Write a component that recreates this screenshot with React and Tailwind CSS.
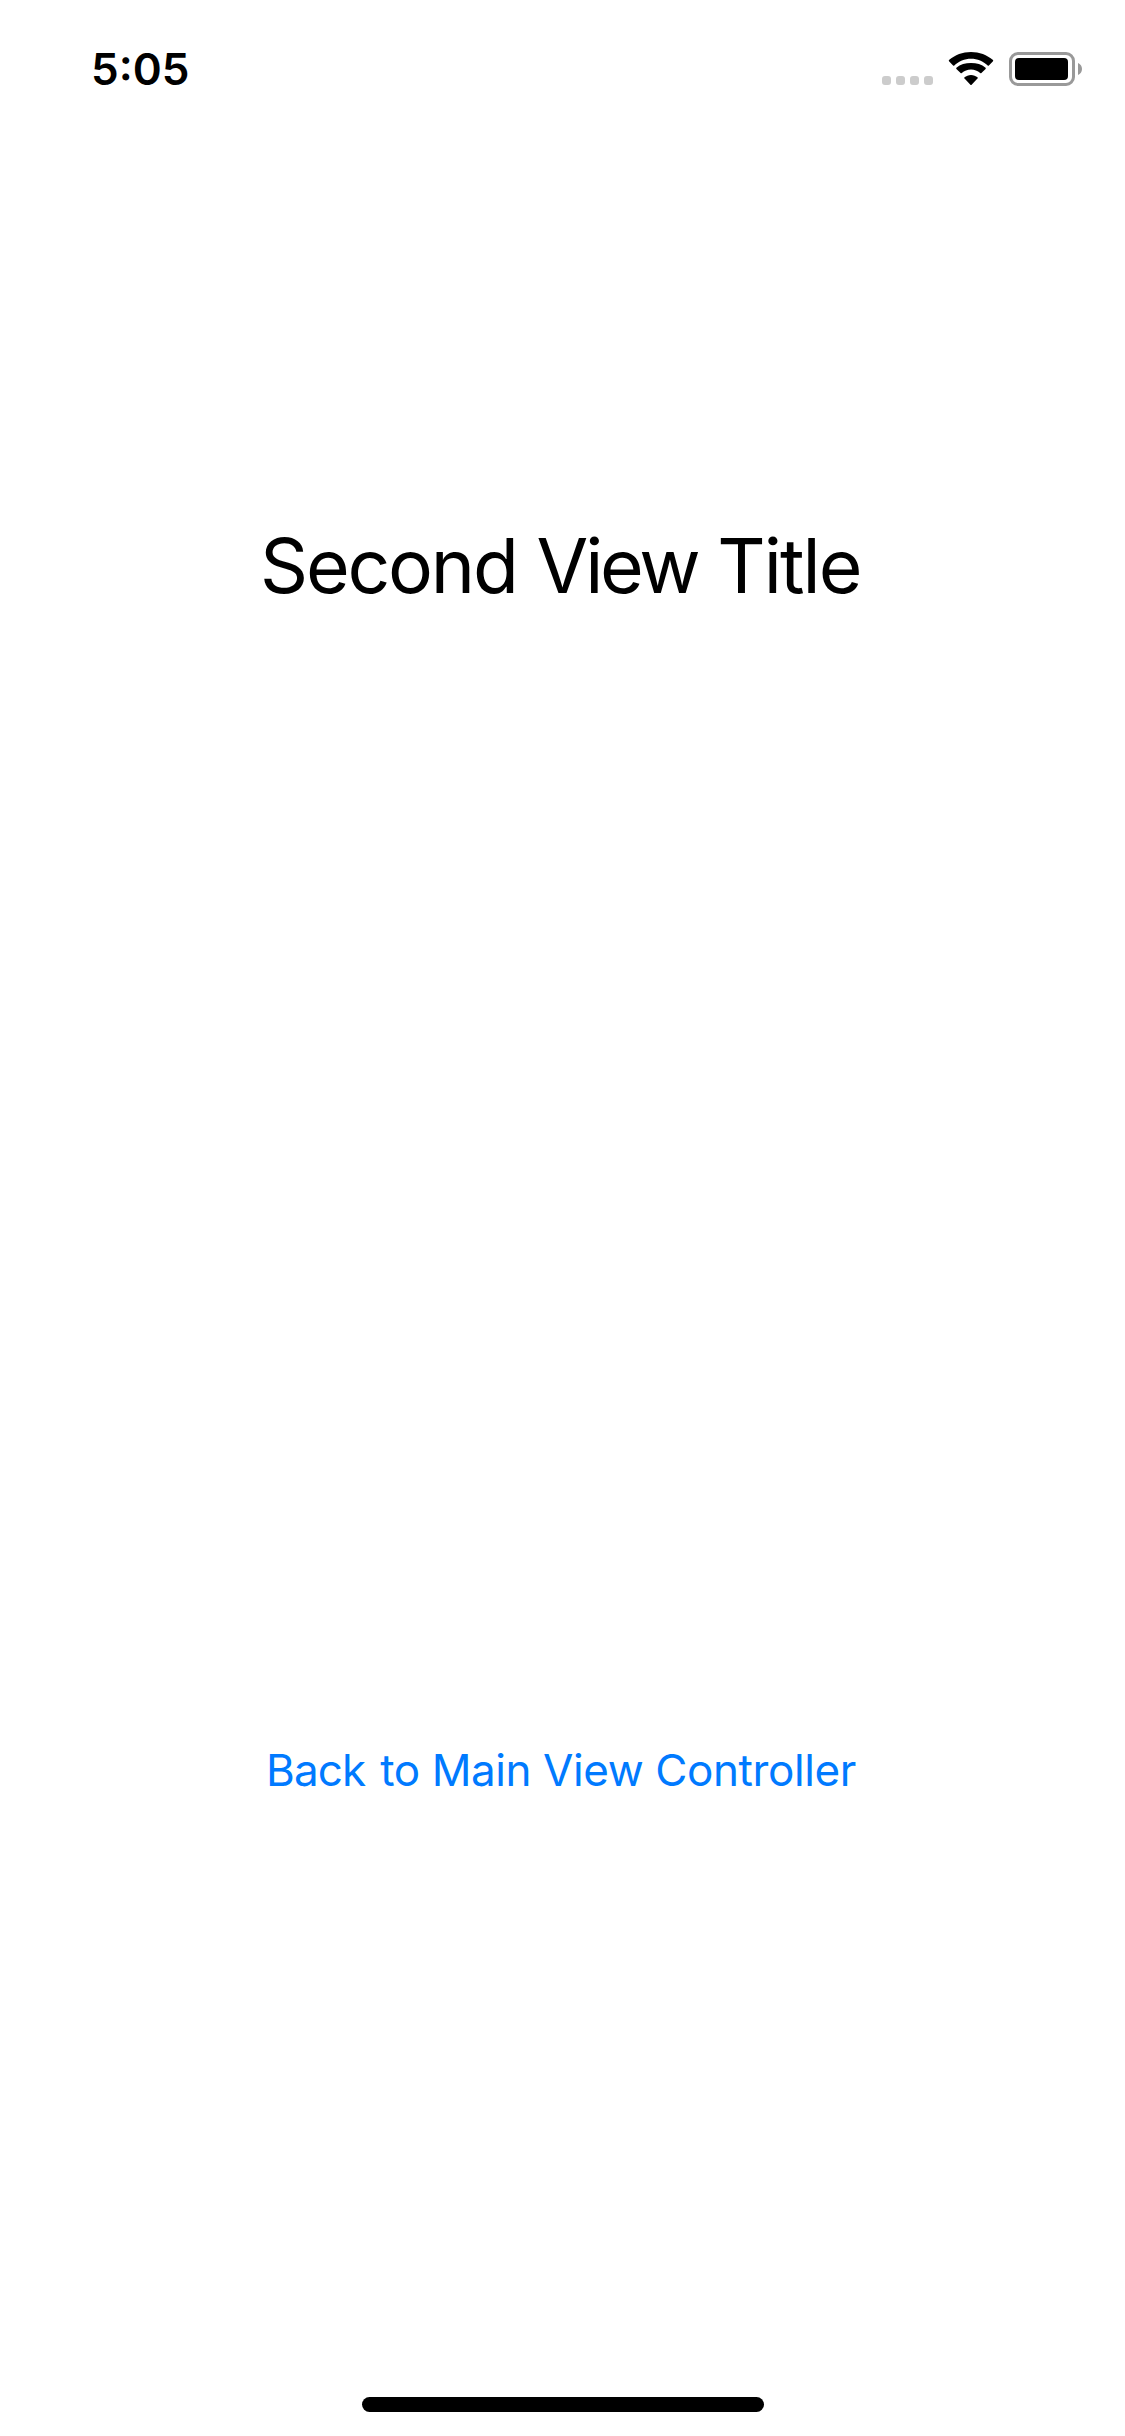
import React from 'react';

function SignalDots() {
  return (
    <div className="mt-[34px] flex gap-[5px]">
      {[0, 1, 2, 3].map((dot) => (
        <span key={dot} className="h-[9px] w-[9px] rounded-[3px] bg-[#cccccc]" />
      ))}
    </div>
  );
}

function WifiIcon() {
  return (
    <svg className="ml-[15px] mt-[10px] block h-[33px] w-[46px]" viewBox="0 0 46 33" fill="#000">
      <path d="M23 6.7c6.4 0 12.3 2.5 16.7 6.8.3.3.9.3 1.2 0l4.1-4.2c.3-.3.3-.9 0-1.2C39.1 2.9 31.3 0 23 0S6.9 2.9 1 8.1c-.3.3-.3.9 0 1.2l4.1 4.2c.3.3.9.3 1.2 0C10.7 9.2 16.6 6.7 23 6.7z" />
      <path d="M23 17.6c3.500 0 6.700 1.300 9.200 3.500.3.300.8.300 1.200 0l4.200-4.200c.3-.3.3-.9 0-1.200C33.700 12.300 28.600 11 23 11s-10.700 1.300-14.600 4.700c-.3.3-.3.900 0 1.200l4.200 4.200c.4.300.9.300 1.200 0 2.500-2.200 5.700-3.500 9.200-3.500z" />
      <path d="M29.500 25.300c.3.300.3.800 0 1.200l-5.900 6.200c-.3.300-.9.300-1.200 0L16.500 26.500c-.3-.4-.3-.9 0-1.200 1.700-1.500 4-2.400 6.500-2.400s4.800.900 6.500 2.400z" />
    </svg>
  );
}

function BatteryIcon() {
  return (
    <div className="ml-[15px] mt-[10px] flex">
      <div className="h-[34px] w-[66px] rounded-[9px] border-[3px] border-[#999999] p-[3px]">
        <div className="h-full w-[53px] rounded-[4px] bg-black" />
      </div>
      <svg className="ml-[3px] mt-[11px] block h-[12px] w-[4px]" viewBox="0 0 4 12" fill="#999">
        <path d="M0 0c2.400 1 4 3.300 4 6s-1.600 5-4 6z" />
      </svg>
    </div>
  );
}

export default function App() {
  return (
    <main className="flex h-[2436px] w-[1125px] flex-col items-start overflow-hidden bg-white font-['Inter',sans-serif] text-black">
      <header className="flex h-[521px] w-full items-start pt-[42px] pl-[91px]">
        <time className="w-[791px] text-[44px] leading-[54px] font-semibold">5:05</time>
        <SignalDots />
        <WifiIcon />
        <BatteryIcon />
      </header>
      <h1 className="ml-[260px] text-[75px] leading-[90px] tracking-[-2.2px] whitespace-nowrap">
        Second <span className="ml-px tracking-[-3.2px]">View</span>{' '}
        <span className="ml-px tracking-[-2px]">Title</span>
      </h1>
      <button
        type="button"
        className="mt-[1132px] ml-[266px] text-[44px] leading-[54px] tracking-[-0.41px] whitespace-nowrap text-[#007aff]"
      >
        <span className="mr-[3px] tracking-[-0.9px]">Back</span> to Main View Controller
      </button>
      <div className="mt-[600px] ml-[362px] h-[15px] w-[402px] rounded-full bg-black" />
    </main>
  );
}
